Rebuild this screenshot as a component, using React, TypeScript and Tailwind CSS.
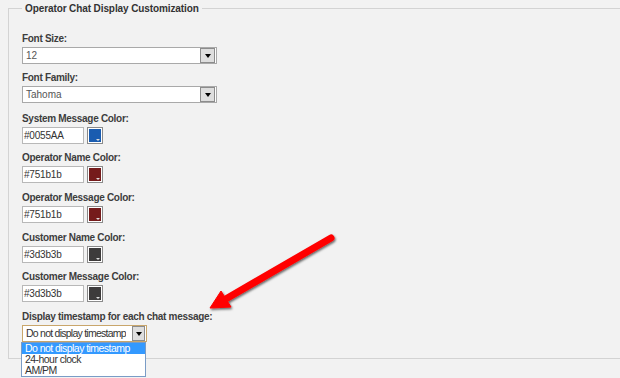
import React from "react";

function Label({ children }: { children: React.ReactNode }) {
  return (
    <div className="text-[10px] leading-[13px] font-bold text-[#3d3d3d] tracking-[-0.3px]">{children}</div>
  );
}

function Arrow({ w = "w-[15px]" }: { w?: string }) {
  return (
    <span className={"ml-auto mr-[1px] flex h-[15px] shrink-0 items-center justify-center border border-[#8c8c8c] bg-[#dedede] " + w}>
      <span className="h-0 w-0 border-x-[3px] border-t-[4px] border-x-transparent border-t-black" />
    </span>
  );
}

function Select({ value }: { value: string }) {
  return (
    <div className="mt-[2px] flex h-[17px] w-[195px] items-center border border-[#a9a9a9] bg-white">
      <span className="pl-[3px] text-[10px] text-[#555]">{value}</span>
      <Arrow />
    </div>
  );
}

function ColorField({ label, value, swatch, mb }: { label: string; value: string; swatch: string; mb: string }) {
  return (
    <div className={mb}>
      <Label>{label}</Label>
      <div className="mt-[2px] flex items-center gap-[3px]">
        <div className="flex h-[17px] w-[62px] items-center border border-[#b8b8b8] bg-white pl-[1px] text-[10px] tracking-[-0.2px] text-[#333]">
          {value}
        </div>
        <div className="relative h-[17px] w-[16px] border border-[#8a8a8a] bg-white p-[1px]">
          <div className={"h-full w-full " + swatch} />
          <span className="absolute bottom-[2px] right-[2px] h-0 w-0 border-x-[2px] border-t-[2px] border-x-transparent border-t-[#ddd]" />
        </div>
      </div>
    </div>
  );
}

export default function App() {
  return (
    <div className="relative h-[378px] w-[620px] overflow-hidden bg-[#f2f2f2] font-['Liberation_Sans',Arial,sans-serif]">
      <fieldset className="ml-[8px] mt-[2px] w-[640px] border border-r-0 border-[#d3d3d3] pb-[16px] pl-[13px]">
        <legend className="px-[3px] text-[10px] leading-[13px] font-bold text-[#333] tracking-[-0.1px]">
          Operator Chat Display Customization
        </legend>

        <div className="mt-[17px] mb-[7px]">
          <Label>Font Size:</Label>
          <Select value="12" />
        </div>
        <div className="mb-[9px]">
          <Label>Font Family:</Label>
          <Select value="Tahoma" />
        </div>

        <ColorField label="System Message Color:" value="#0055AA" swatch="bg-[#1a5cb0]" mb="mb-[7px]" />
        <ColorField label="Operator Name Color:" value="#751b1b" swatch="bg-[#751b1b]" mb="mb-[8px]" />
        <ColorField label="Operator Message Color:" value="#751b1b" swatch="bg-[#751b1b]" mb="mb-[8px]" />
        <ColorField label="Customer Name Color:" value="#3d3b3b" swatch="bg-[#3d3b3b]" mb="mb-[7px]" />
        <ColorField label="Customer Message Color:" value="#3d3b3b" swatch="bg-[#3d3b3b]" mb="mb-[8px]" />

        <div>
          <Label>Display timestamp for each chat message:</Label>
          <div className="mt-[2px] flex h-[17px] w-[125px] items-center border border-[#c9a66b] bg-white">
            <span className="min-w-0 overflow-hidden whitespace-nowrap pl-[3px] text-[10.5px] tracking-[-0.75px] text-[#333]">Do not display timestamp</span>
            <Arrow w="w-[13px]" />
          </div>
        </div>
      </fieldset>

      <ul className="absolute left-[21px] top-[342px] w-[125px] border border-[#7a9cc6] bg-white text-[10.5px] leading-[11px] tracking-[-0.55px] text-[#333]">
        <li className="bg-[#3399ff] pl-[3px] text-white">Do not display timestamp</li>
        <li className="pl-[3px]">24-hour clock</li>
        <li className="pl-[3px]">AM/PM</li>
      </ul>

      <svg className="pointer-events-none absolute left-0 top-0" width="620" height="378" viewBox="0 0 620 378">
        <defs>
          <filter id="sh" x="-20%" y="-20%" width="140%" height="140%">
            <feDropShadow dx="1" dy="1.5" stdDeviation="1.2" floodColor="#000" floodOpacity="0.6" />
          </filter>
        </defs>
        <g filter="url(#sh)" fill="#ff0000" stroke="#ff0000">
          <line x1="331" y1="238" x2="224" y2="300" strokeWidth="7" strokeLinecap="round" />
          <polygon points="210,308 221,291 231,307" strokeWidth="1" strokeLinejoin="round" />
        </g>
      </svg>
    </div>
  );
}
